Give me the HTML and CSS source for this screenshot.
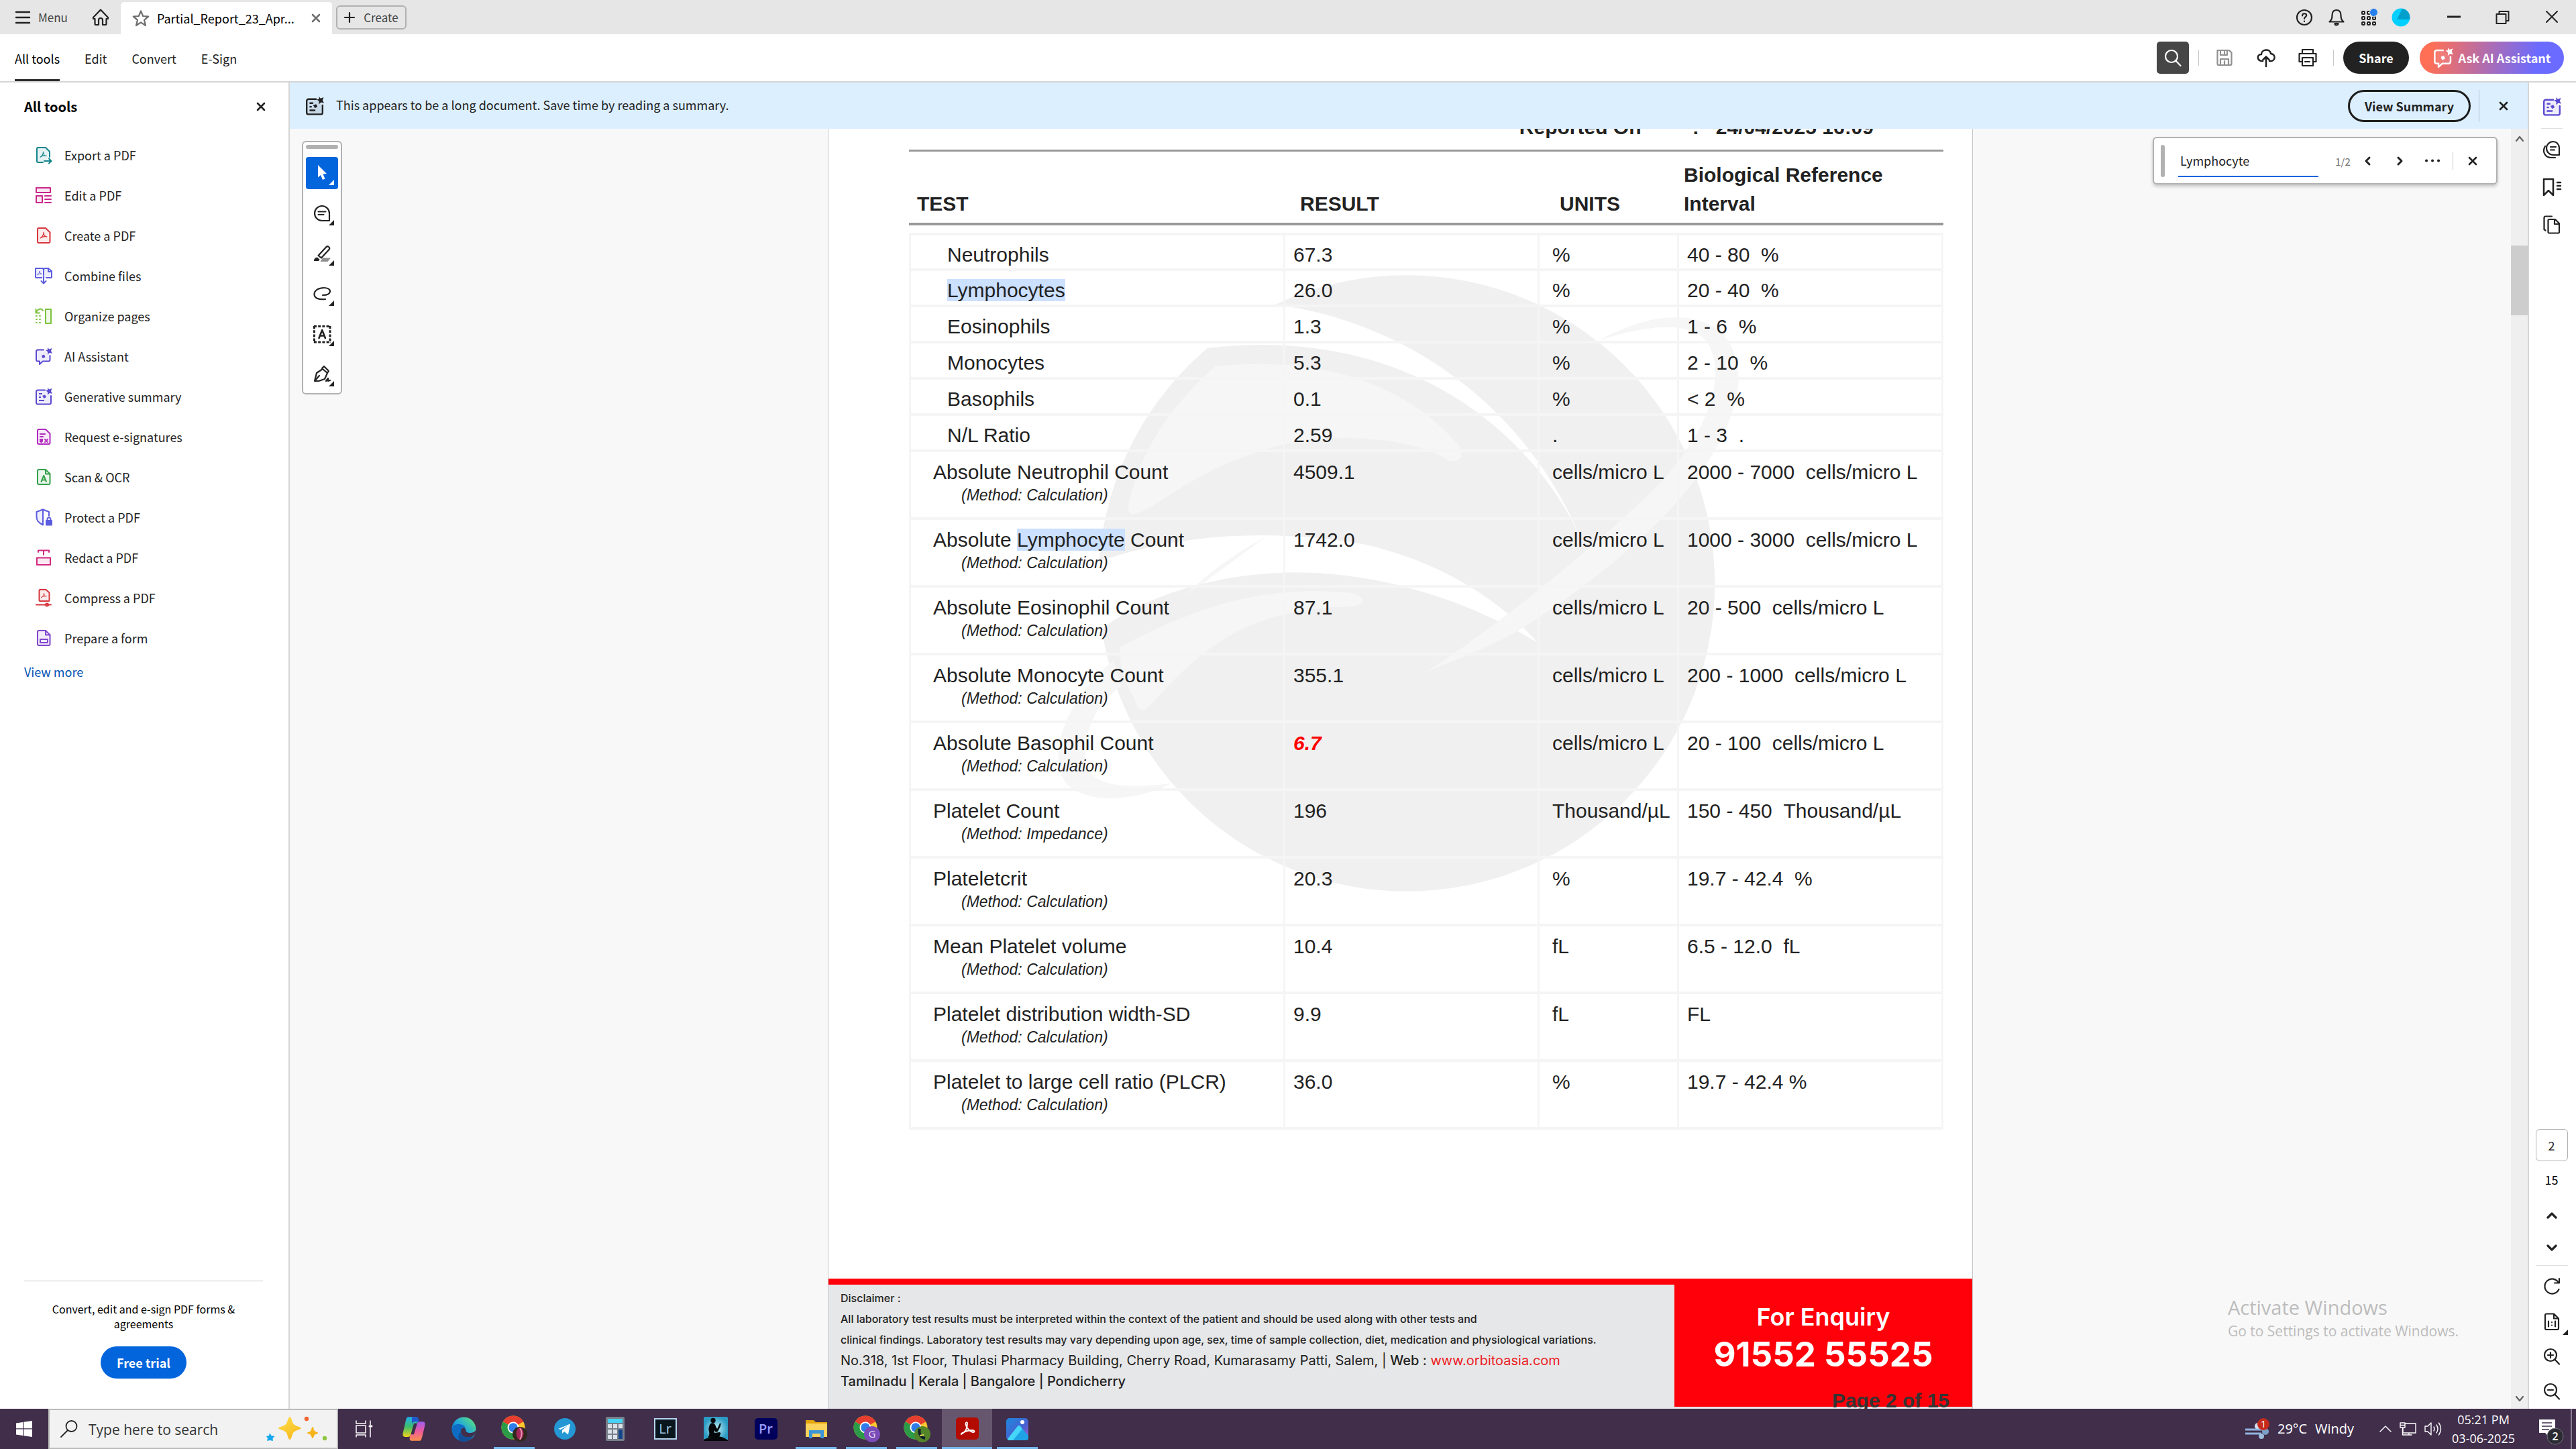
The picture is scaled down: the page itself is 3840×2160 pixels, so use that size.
FILE: index.html
```html
<!DOCTYPE html>
<html lang="en">
<head>
<meta charset="utf-8">
<title>Partial_Report_23_Apr...</title>
<link rel="stylesheet" href="styles.css">
</head>
<body>
<svg class="defs" aria-hidden="true">
  <defs>
    <linearGradient id="edge-a" x1="0" y1="1" x2="1" y2="0"><stop offset="0" stop-color="#0c59a4"/><stop offset=".5" stop-color="#1fa6dd"/><stop offset="1" stop-color="#66eb6e"/></linearGradient>
    <linearGradient id="cop-a" x1="0" y1="0" x2="0" y2="1"><stop offset="0" stop-color="#1fb0f0"/><stop offset=".5" stop-color="#3fbf6a"/><stop offset="1" stop-color="#f2d21c"/></linearGradient>
    <linearGradient id="cop-b" x1="0" y1="0" x2="0" y2="1"><stop offset="0" stop-color="#a05cf0"/><stop offset=".5" stop-color="#ee5a9c"/><stop offset="1" stop-color="#fb8f4c"/></linearGradient>
    <linearGradient id="photo" x1="0" y1="0" x2="1" y2="1"><stop offset="0" stop-color="#1b8ae0"/><stop offset=".6" stop-color="#4a5fd0"/><stop offset="1" stop-color="#b45ac8"/></linearGradient>
    <radialGradient id="kindle"><stop offset="0" stop-color="#c9f2f8"/><stop offset="1" stop-color="#2a9cc4"/></radialGradient>
    <linearGradient id="gold" x1="0" y1="0" x2="1" y2="1"><stop offset="0" stop-color="#ffe04a"/><stop offset="1" stop-color="#f2a90c"/></linearGradient>
  </defs>
  <symbol id="x" viewBox="0 0 26 26"><path d="M8 8l10 10M18 8L8 18" stroke-width="2.6"/></symbol>
  <symbol id="acro" viewBox="0 0 12 12"><path d="M1 10C4 8 6 5 6 1.500C6 5 8 8 11 8C8 7 4 8 1 10Z" stroke-width="1.300"/></symbol>
  <symbol id="sum" viewBox="0 0 26 26"><path class="t" d="M15 3.500H4.500A2.500 2.500 0 0 0 2 6v16a2.500 2.500 0 0 0 2.500 2.500h17A2.500 2.500 0 0 0 24 22V12"/><path d="M6 9h5M6 14h3M6 19h8" stroke-linecap="butt"/><path class="s" d="M19 0l2.300 2.500L25.500 1l-1.500 4 2 4-4-1-3 2.500V6.500L16 4l3-.5zM11 12l4-1.500 2 3.500-3.500 2z"/></symbol>
  <symbol id="ai" viewBox="0 0 26 26"><path class="t" d="M13 3.500H4.500A2.500 2.500 0 0 0 2 6v12a2.500 2.500 0 0 0 2.500 2.500H7V25l5-4.500h8a2.500 2.500 0 0 0 2.500-2.500v-6"/><path class="s" d="M19 0l2.300 2.500L25.500 1l-1.500 4 2 4-4-1-3 2.500V6.500L16 4l3-.5zM10 12l4-1.500 1.500 4-4 1.500z"/></symbol>
  <symbol id="file" viewBox="0 0 26 26"><path class="t" d="M6 2h10l6.500 6.500V22a2 2 0 0 1-2 2H6a2 2 0 0 1-2-2V4a2 2 0 0 1 2-2z"/></symbol>
  <symbol id="zoomin" viewBox="0 0 26 26"><circle cx="11" cy="11" r="9"/><path d="M17.500 17.500L24 24.500M11 7v8M7 11h8"/></symbol>
  <symbol id="zoomout" viewBox="0 0 26 26"><circle cx="11" cy="11" r="9"/><path d="M17.500 17.500L24 24.500M7 11h8"/></symbol>
  <symbol id="chrome" viewBox="0 0 38 38"><circle cx="19" cy="19" r="18.500" fill="#fcc72e"/><path d="M19 19L3 9.700A18.500 18.500 0 0 1 35 9.700z" fill="#e63e2f"/><path d="M3 9.700A18.500 18.500 0 0 0 19 37.500l8-14-8-4.500z" fill="#2b9b48"/><path d="M19 10h16.200l-4-5h-20z" fill="#e63e2f"/><circle cx="19" cy="19" r="9" fill="#fff"/><circle cx="19" cy="19" r="7" fill="#2f7de9"/></symbol>
</svg>

<header class="titlebar">
  <button class="menu"><svg class="i i22" viewBox="0 0 22 22"><path d="M1 3h20M1 11h20M1 19h20" stroke-width="2.400"/></svg>Menu</button>
  <button class="home" aria-label="Home"><svg class="i" viewBox="0 0 26 26"><path d="M2 13L13 1.500 24 13v2h-2.500v7.500a1.500 1.500 0 0 1-1.500 1.500h-4v-7a3 3 0 0 0-6 0v7H6a1.500 1.500 0 0 1-1.500-1.500V15H2z"/></svg></button>
  <div class="tab">
    <svg class="i gray" viewBox="0 0 26 26"><path d="M13 2.500l3.200 7.500 8 .6-6.200 5.200 2 8.200-7-4.600L6 24l2-8.200L1.800 10.600l8-.6z"/></svg>
    <span>Partial_Report_23_Apr...</span>
    <button aria-label="Close tab"><svg class="i gray"><use href="#x"/></svg></button>
  </div>
  <button class="create"><svg class="i i16" viewBox="0 0 16 16"><path d="M8 1v14M1 8h14"/></svg>Create</button>
  <div class="sys">
    <button aria-label="Help"><svg class="i" viewBox="0 0 26 26"><circle cx="13" cy="13" r="11"/><path d="M10 10.500c0-4.500 6.500-4 6.200-.5-.2 2.300-3.200 2-3.200 5M13 18.500v.6"/></svg></button>
    <button aria-label="Notifications"><svg class="i" viewBox="0 0 26 26"><path d="M13 2c5 0 6.500 3.500 6.500 8 0 5 1 6.500 4 9.500h-21c3-3 4-4.500 4-9.500 0-4.500 1.500-8 6.500-8z"/><path d="M10.500 22a2.500 2.500 0 0 0 5 0z"/></svg></button>
    <button aria-label="Apps"><svg class="i" viewBox="0 0 26 26"><g stroke-width="2"><rect x="3" y="4" width="4" height="4" rx="1"/><rect x="11" y="4" width="4" height="4" rx="1"/><rect x="3" y="12" width="4" height="4" rx="1"/><rect x="11" y="12" width="4" height="4" rx="1"/><rect x="19" y="12" width="4" height="4" rx="1"/><rect x="3" y="20" width="4" height="4" rx="1"/><rect x="11" y="20" width="4" height="4" rx="1"/><rect x="19" y="20" width="4" height="4" rx="1"/></g><circle cx="20.500" cy="5.500" r="6" fill="#2680eb" stroke="#e6e6e6" stroke-width="1"/></svg></button>
    <button aria-label="Account"><svg class="i i28" viewBox="0 0 28 28"><circle cx="14" cy="14" r="13.500" fill="#00d0ff" stroke="none"/><path d="M16 1a13 13 0 0 1 11 16H8z" fill="#009fcc" stroke="none"/></svg></button>
  </div>
  <div class="win">
    <button aria-label="Minimize"><svg class="i" viewBox="0 0 26 26"><path d="M3 12h20" stroke-width="3" stroke-linecap="butt"/></svg></button>
    <button aria-label="Restore"><svg class="i" viewBox="0 0 26 26"><path d="M3.500 8h14v14h-14zM7.500 8V4h14v14h-4" stroke-width="2"/></svg></button>
    <button aria-label="Close"><svg class="i" viewBox="0 0 26 26"><path d="M5 4l16 16M21 4L5 20" stroke-width="2"/></svg></button>
  </div>
</header>

<nav class="toolbar">
  <a href="#" class="on">All tools</a><a href="#">Edit</a><a href="#">Convert</a><a href="#">E-Sign</a>
  <div class="actions">
    <button class="find-on" aria-label="Find"><svg class="i" viewBox="0 0 26 26"><circle cx="11" cy="11" r="9"/><path d="M17 17l7.500 8"/></svg></button>
    <i class="vr"></i>
    <button aria-label="Save"><svg class="i light" viewBox="0 0 26 26"><path d="M3 2h17l3.500 3.500V22a2 2 0 0 1-2 2h-17a2 2 0 0 1-2-2V2zM7 2v7h10V2M13 4v3M7 24v-9h12v9M13 18v6"/></svg></button>
    <button aria-label="Upload"><svg class="i i28" viewBox="0 0 28 28"><path d="M9 19H7.500C0 18 0 9 7 9c0-8 13-9 14-1 8 1 7 11 0 11h-2M14 27V13M9.500 17l4.500-4.500 4.500 4.500" stroke-width="2.500"/></svg></button>
    <button aria-label="Print"><svg class="i i28" viewBox="0 0 28 28"><path d="M6 8V2h16v6M6 20H1.500V8h25v12H22M6 14h16v12H6zM10 20h7"/></svg></button>
    <i class="vr"></i>
    <button class="share">Share</button>
    <button class="ask"><svg class="i i30"><use href="#ai"/></svg>Ask AI Assistant</button>
  </div>
</nav>

<main>
  <aside class="tools">
    <div class="tools-head"><h2>All tools</h2><button aria-label="Close panel"><svg class="i"><use href="#x"/></svg></button></div>
    <ul>
      <li><a href="#"><svg class="i" style="color:#12858b" viewBox="0 0 26 26"><path class="t" d="M12 24H5a2 2 0 0 1-2-2V4a2 2 0 0 1 2-2h11l6 6v8"/><use href="#acro" x="7" y="7" width="11" height="11"/><path d="M14 22h10M21 18.500l3.500 3.500-3.500 3.500"/></svg>Export a PDF</a></li>
      <li><a href="#"><svg class="i" style="color:#c9268a" viewBox="0 0 26 26"><path class="t" d="M2 2h21v7H2zM2 14h9v10H2z"/><path d="M15 14h9M15 19h9M15 24h9"/></svg>Edit a PDF</a></li>
      <li><a href="#"><svg class="i" style="color:#d7373f" viewBox="0 0 26 26"><use href="#file"/><use href="#acro" x="7" y="7" width="12" height="12"/></svg>Create a PDF</a></li>
      <li><a href="#"><svg class="i" style="color:#5c5ce0" viewBox="0 0 26 26"><path class="t" d="M10 16H2a1 1 0 0 1-1-1V2h11l1 2 1-2h6l5 4v9a1 1 0 0 1-1 1h-7M13 3v9"/><path d="M20 2v5h5"/><use href="#acro" x="3" y="5" width="8" height="8"/><path d="M13 14v10M9.500 21l3.500 3.500 3.500-3.500"/></svg>Combine files</a></li>
      <li><a href="#"><svg class="i" style="color:#7cc33f" viewBox="0 0 26 26"><path class="t" d="M16 3h8v21h-8z"/><path d="M2 8c2-6 8-7 10-3M1.500 3v5.500H7"/><path d="M2 13h10M2 18h10M2 23h10" stroke-dasharray="1 4"/></svg>Organize pages</a></li>
      <li><a href="#"><svg class="i" style="color:#5a49d0"><use href="#ai"/></svg>AI Assistant</a></li>
      <li><a href="#"><svg class="i" style="color:#5a49d0"><use href="#sum"/></svg>Generative summary</a></li>
      <li><a href="#"><svg class="i" style="color:#b32abf" viewBox="0 0 26 26"><use href="#file"/><path d="M8 9h7M8 13h4M15 17l4 4M19 17l-4 4"/><path class="s" d="M7 16h5v4l-2.500 2.500L7 20z"/></svg>Request e-signatures</a></li>
      <li><a href="#"><svg class="i" style="color:#35a14b" viewBox="0 0 26 26"><use href="#file"/><path d="M16 2v6.500h6.500M9.500 20l3.700-9 3.800 9M10.700 17.500h5"/></svg>Scan &amp; OCR</a></li>
      <li><a href="#"><svg class="i" style="color:#5c5ce0" viewBox="0 0 26 26"><path class="t" d="M12 24.500C5 21 2.500 18 2.500 12V5L12 1.500z"/><path d="M12 1.500L21 5v6"/><rect class="s" x="16" y="17" width="10" height="8.500" rx="1"/><path d="M18.500 17v-1a2.500 2.500 0 0 1 5 0v1"/></svg>Protect a PDF</a></li>
      <li><a href="#"><svg class="i" style="color:#d12a80" viewBox="0 0 26 26"><path class="t" d="M3 13.500h20V24H3z"/><path d="M5 5V2.500h16V5M13 2.500V9"/></svg>Redact a PDF</a></li>
      <li><a href="#"><svg class="i" style="color:#d7373f" viewBox="0 0 26 26"><path class="t" d="M7.500 1h9l5 4.500V17a1 1 0 0 1-1 1h-13a1 1 0 0 1-1-1V2a1 1 0 0 1 1-1z"/><use href="#acro" x="9" y="5" width="9" height="9"/><path d="M2 23.500h22"/><circle class="t" cx="18" cy="23.500" r="2"/></svg>Compress a PDF</a></li>
      <li><a href="#"><svg class="i" style="color:#8148cf" viewBox="0 0 26 26"><use href="#file"/><path d="M16 2v6.500h6.500M8 15h11v5H8z"/></svg>Prepare a form</a></li>
    </ul>
    <a href="#" class="more">View more</a>
    <div class="promo"><p>Convert, edit and e-sign PDF forms &amp; agreements</p><button>Free trial</button></div>
  </aside>

  <section class="center">
    <div class="banner">
      <svg class="i i28"><use href="#sum"/></svg>
      <p>This appears to be a long document. Save time by reading a summary.</p>
      <button class="view">View Summary</button><i></i>
      <button aria-label="Dismiss"><svg class="i"><use href="#x"/></svg></button>
    </div>
    <div class="viewer">
      <div class="scroller">
        <article class="page">
          <div class="sheet">
            <svg class="mark-bg" viewBox="0 0 1568 1568" preserveAspectRatio="none" aria-hidden="true">
              <ellipse cx="752" cy="814" rx="456" ry="706" fill="#f0f0f0"/>
              <path fill="#fff" d="M457 275L380 200 555 175C760 215 930 420 1008 705 940 480 760 220 457 275z"/>
              <path fill="#fff" d="M285 770C420 695 560 690 690 725 800 765 885 845 946 950 840 850 700 780 560 790 440 800 350 860 300 920z"/>
              <g fill="#f6f6f6">
                <path d="M470 316C640 290 760 370 830 500Q842 535 815 534C770 480 640 465 560 500 450 545 400 620 360 650Q340 665 340 640C355 520 400 410 470 316z"/>
                <path d="M328 960C460 850 560 820 670 836 700 850 690 870 650 868 500 880 440 980 370 1098Q355 1115 350 1080 325 1020 328 960z"/>
                <path d="M1036 258C1150 160 1245 200 1243 350 1235 520 1120 720 930 910 880 960 820 990 780 1018 900 900 1060 690 1130 580 1210 440 1220 330 1200 270 1180 210 1110 220 1036 258z"/>
                <path d="M545 706L450 815 425 840Q480 760 545 706z"/>
                <path d="M318 990C230 1110 225 1230 250 1275 280 1320 350 1315 405 1272 320 1290 275 1270 276 1210 278 1130 300 1080 330 1050z"/>
              </g>
            </svg>
            <dl class="meta"><dt>Reported On</dt><dd>:</dd><dd>24/04/2025 16:09</dd></dl>
            <table>
              <colgroup><col class="c1"><col class="c2"><col class="c3"><col></colgroup>
              <thead><tr><th>TEST</th><th>RESULT</th><th>UNITS</th><th>Biological Reference<br>Interval</th></tr></thead>
              <tbody>
                <tr class="sub"><td>Neutrophils</td><td>67.3</td><td>%</td><td>40 - 80 &nbsp;%</td></tr>
                <tr class="sub"><td><mark>Lymphocytes</mark></td><td>26.0</td><td>%</td><td>20 - 40 &nbsp;%</td></tr>
                <tr class="sub"><td>Eosinophils</td><td>1.3</td><td>%</td><td>1 - 6 &nbsp;%</td></tr>
                <tr class="sub"><td>Monocytes</td><td>5.3</td><td>%</td><td>2 - 10 &nbsp;%</td></tr>
                <tr class="sub"><td>Basophils</td><td>0.1</td><td>%</td><td>&lt; 2 &nbsp;%</td></tr>
                <tr class="sub"><td>N/L Ratio</td><td>2.59</td><td>.</td><td>1 - 3 &nbsp;.</td></tr>
                <tr><td>Absolute Neutrophil Count<em>(Method: Calculation)</em></td><td>4509.1</td><td>cells/micro L</td><td>2000 - 7000 &nbsp;cells/micro L</td></tr>
                <tr><td>Absolute <mark>Lymphocyte</mark> Count<em>(Method: Calculation)</em></td><td>1742.0</td><td>cells/micro L</td><td>1000 - 3000 &nbsp;cells/micro L</td></tr>
                <tr><td>Absolute Eosinophil Count<em>(Method: Calculation)</em></td><td>87.1</td><td>cells/micro L</td><td>20 - 500 &nbsp;cells/micro L</td></tr>
                <tr><td>Absolute Monocyte Count<em>(Method: Calculation)</em></td><td>355.1</td><td>cells/micro L</td><td>200 - 1000 &nbsp;cells/micro L</td></tr>
                <tr><td>Absolute Basophil Count<em>(Method: Calculation)</em></td><td class="flag">6.7</td><td>cells/micro L</td><td>20 - 100 &nbsp;cells/micro L</td></tr>
                <tr><td>Platelet Count<em>(Method: Impedance)</em></td><td>196</td><td>Thousand/µL</td><td>150 - 450 &nbsp;Thousand/µL</td></tr>
                <tr><td>Plateletcrit<em>(Method: Calculation)</em></td><td>20.3</td><td>%</td><td>19.7 - 42.4 &nbsp;%</td></tr>
                <tr><td>Mean Platelet volume<em>(Method: Calculation)</em></td><td>10.4</td><td>fL</td><td>6.5 - 12.0 &nbsp;fL</td></tr>
                <tr><td>Platelet distribution width-SD<em>(Method: Calculation)</em></td><td>9.9</td><td>fL</td><td>FL</td></tr>
                <tr><td>Platelet to large cell ratio (PLCR)<em>(Method: Calculation)</em></td><td>36.0</td><td>%</td><td>19.7 - 42.4 %</td></tr>
              </tbody>
            </table>
          </div>
          <footer class="lab">
            <div class="disc">
              <p>Disclaimer :</p>
              <p>All laboratory test results must be interpreted within the context of the patient and should be used along with other tests and</p>
              <p>clinical findings. Laboratory test results may vary depending upon age, sex, time of sample collection, diet, medication and physiological variations.</p>
              <p class="addr">No.318, 1st Floor, Thulasi Pharmacy Building, Cherry Road, Kumarasamy Patti, Salem, | <b>Web :</b> <a href="#">www.orbitoasia.com</a></p>
              <p class="addr"><b>Tamilnadu | Kerala | Bangalore | Pondicherry</b></p>
            </div>
            <div class="call"><p>For Enquiry</p><strong>91552 55525</strong></div>
            <span class="pageno">Page 2 of 15</span>
          </footer>
        </article>

        <div class="float">
          <i class="grip"></i>
          <button class="sel" aria-label="Select"><svg class="i" viewBox="0 0 26 26"><path d="M7 1l13 13-5.500.5 3 7-3.500 1.500-3-7L7 19.500z" fill="#fff" stroke="none"/></svg></button>
          <button aria-label="Comment"><svg class="i" viewBox="0 0 26 26"><path d="M13 2a11 11 0 0 0 0 22h11V13A11 11 0 0 0 13 2z"/><path d="M7.500 10.500h11M7.500 15h8"/></svg></button>
          <button aria-label="Highlight"><svg class="i" viewBox="0 0 26 26"><path d="M7.500 16L19 3.500a2.500 2.500 0 0 1 4.500 3.500L12 19.500z"/><path d="M1 24c0-4 3-6 5.500-5l3 3-1.500 2z" class="s"/><path d="M14 19.500h12L21.500 25h-11z" fill="#909090" stroke="none"/></svg></button>
          <button aria-label="Draw"><svg class="i" viewBox="0 0 26 26"><path d="M14 15c5 0 11-1 11-6 0-3-4-5-9-5C8 4 1.500 8 1.500 13.500S7 22 18 21"/></svg></button>
          <button aria-label="Add text"><svg class="i" viewBox="0 0 26 26"><path d="M1 1.500h25M1 25h25M1.500 1v25M25 1v25" stroke-width="3" stroke-dasharray="4 2.200" stroke-linecap="butt"/><path d="M8.500 19l4.700-12 4.700 12M10 15.500h6.500" stroke-width="2.600"/></svg></button>
          <button aria-label="Sign"><svg class="i" viewBox="0 0 26 26"><path d="M2 23L5 11l9-6 7 6-4 9-9 3zM2 23l7-8M13 4l3-3 7 7-2 3M19 23l3-4v4l3-1"/></svg></button>
        </div>

        <form class="find">
          <i class="grip"></i>
          <input type="text" value="Lymphocyte" aria-label="Find text">
          <span>1/2</span>
          <button type="button" aria-label="Previous"><svg class="i" viewBox="0 0 26 26"><path d="M16 8l-5 5 5 5" stroke-width="3"/></svg></button>
          <button type="button" aria-label="Next"><svg class="i" viewBox="0 0 26 26"><path d="M10 8l5 5-5 5" stroke-width="3"/></svg></button>
          <button type="button" aria-label="More"><svg class="i" viewBox="0 0 26 26"><path d="M4 12.500h.1M13 12.500h.1M22 12.500h.1" stroke-width="4"/></svg></button>
          <b></b>
          <button type="button" aria-label="Close find"><svg class="i"><use href="#x"/></svg></button>
        </form>

        <div class="activate"><p>Activate Windows</p><p>Go to Settings to activate Windows.</p></div>
      </div>
      <div class="scrollbar">
        <svg class="i i16" viewBox="0 0 16 16"><path d="M3 11l5-6 5 6"/></svg>
        <i></i>
        <svg class="i i16 end" viewBox="0 0 16 16"><path d="M3 5l5 6 5-6"/></svg>
      </div>
    </div>
  </section>

  <aside class="rail">
    <button aria-label="Summary"><svg class="i i28 violet"><use href="#sum"/></svg></button>
    <hr>
    <button aria-label="Comments"><svg class="i i28" viewBox="0 0 28 28"><path d="M16 2a10 10 0 0 0 0 20h9V12a9.500 9.500 0 0 0-9-10zM12 10h8M12 14.500h6M4 9c-5 8 0 17 9 17h6"/></svg></button>
    <button aria-label="Bookmarks"><svg class="i i28" viewBox="0 0 28 28"><path d="M2 2h14v24l-7-7-7 7zM22 7h5M22 12h5M22 17h5" stroke-width="2.500"/></svg></button>
    <button aria-label="Pages"><svg class="i i28" viewBox="0 0 28 28"><path d="M10 6h9l6 6v13a1.500 1.500 0 0 1-1.500 1.500H10A1.500 1.500 0 0 1 8.500 25V7.500A1.500 1.500 0 0 1 10 6zM18 6v7h7M14 1.500H4.500A2 2 0 0 0 2.500 3.500V21l2 1.500"/></svg></button>
    <div class="rail-end">
      <input type="text" value="2" aria-label="Page number">
      <span>15</span>
      <button aria-label="Page up"><svg class="i" viewBox="0 0 26 26"><path d="M7 16l6-6 6 6" stroke-width="3.200"/></svg></button>
      <button aria-label="Page down"><svg class="i" viewBox="0 0 26 26"><path d="M7 10l6 6 6-6" stroke-width="3.200"/></svg></button>
      <hr>
      <button class="tall" aria-label="Rotate"><svg class="i" viewBox="0 0 26 26"><path d="M23 8A11 11 0 1 0 23.500 18M24 2v6.500h-7" /></svg></button>
      <button class="tall corner" aria-label="Page size"><svg class="i" viewBox="0 0 26 26"><path d="M5 1.500h11l7 7V23a2 2 0 0 1-2 2H5a2 2 0 0 1-2-2V3.500a2 2 0 0 1 2-2zM16 1.500v7h7M8 12.500v8M18 12.500v8M13 14v.1M13 18.500v.1"/></svg></button>
      <button class="tall" aria-label="Zoom in"><svg class="i"><use href="#zoomin"/></svg></button>
      <button class="tall" aria-label="Zoom out"><svg class="i"><use href="#zoomout"/></svg></button>
    </div>
  </aside>
</main>

<footer class="taskbar">
  <button class="start" aria-label="Start"><svg width="24" height="24" viewBox="0 0 24 24" fill="#fff"><path d="M0 3.400L10 2v9.300H0zM11.200 1.800L24 0v11.300H11.200zM0 12.500h10V22L0 20.500zM11.200 12.500H24V24l-12.800-1.800z"/></svg></button>
  <label class="search">
    <svg class="i" viewBox="0 0 26 26"><circle cx="16.500" cy="9" r="8"/><path d="M11 15L1 25"/></svg>
    <input type="text" placeholder="Type here to search">
    <svg width="94" height="38" viewBox="0 0 94 38"><path d="M37 1c2 0 3 6 5 10s12 5 12 7-10 3-12 7-3 10-5 10-3-6-5-10-12-5-12-7 10-3 12-7 3-10 5-10zM71 16c1.500 0 1.500 4 3 6s5 1.500 5 3-3.500 1.500-5 3-1.500 5-3 5-1.500-3.500-3-5-5-1.500-5-3 3.500-1 5-3 1.500-6 3-6z" fill="url(#gold)"/><path d="M7 25l2.500 4 5 1-3 3 .5 4-5-1-4 1 1-4-2-3 4-1z" fill="#17a8ee"/><circle cx="62" cy="4" r="3.200" fill="#f26430"/><circle cx="89" cy="33" r="3.200" fill="#8fc640"/></svg>
  </label>
  <div class="apps">
    <button aria-label="Task view"><svg class="i" viewBox="0 0 26 26" stroke="#fff"><path d="M2 1v4h14V1M2 8h14v11H2zM2 25v-3h14v3M23 1v6M23 11v14" stroke-width="1.500"/><path d="M22 9h3" stroke-width="3"/></svg></button>
    <button aria-label="Copilot"><svg width="36" height="38" viewBox="0 0 36 32" preserveAspectRatio="none"><path d="M9 1h12c3 0 4 2 3 5l-1 3h-5l-5 15c-1 2-2 2-4 2H5c-4 0-4-3-3-6L6 5c1-3 2-4 3-4z" fill="url(#cop-a)"/><path d="M15 1h6c3 0 4 2 5 6h-7c-2 0-3 1-4 3z" fill="#1f57d0"/><path d="M27 31H15c-3 0-4-2-3-5l1-3h5l5-14c1-2 2-2 4-2h4c4 0 4 3 3 6l-4 14c-1 3-2 4-3 4z" fill="url(#cop-b)"/></svg></button>
    <button aria-label="Edge"><svg width="37" height="37" viewBox="0 0 37 37"><circle cx="18.500" cy="18.500" r="18" fill="url(#edge-a)"/><path d="M1 17C3 9 20 9 21 18c-4-3-8 0-7 5 1 6 8 10 18 6-8 11-31 11-31-12z" fill="#0f6cc4"/><path d="M21 18c0 4 2 6 7 6 4 0 7-2 8.500-4 0 4-2 7-4.500 9-10 4-17 0-18-6-1-5 3-8 7-5z" fill="#402e4b"/><path d="M14 23c1 6 8 10 18 6-5 8-14 9-19 7-4-4-3-10 1-13z" fill="#124f96"/></svg></button>
    <button class="run" aria-label="Chrome"><svg width="40" height="40" viewBox="0 0 40 40"><use href="#chrome" width="36" height="36"/><circle cx="28" cy="28" r="11" fill="#31281d"/><ellipse cx="28" cy="27" rx="5.500" ry="9" fill="#a32458"/><path d="M28 19c4 5 3 12 0 17" stroke="#e898b0" stroke-width="2" fill="none"/></svg></button>
    <button aria-label="Telegram"><svg width="32" height="32" viewBox="0 0 32 32"><circle cx="16" cy="16" r="16" fill="#2497d4"/><path d="M6 16l18-7.500-3 16-6-4.500-3 3v-5l8-7-10 6z" fill="#fff"/></svg></button>
    <button aria-label="Calculator"><svg width="28" height="36" viewBox="0 0 28 36"><rect width="28" height="36" rx="2" fill="#77808a"/><rect x="3" y="3" width="22" height="6" fill="#45d3f5"/><path d="M3 11h6v6H3zM11 11h6v6h-6zM19 11h6v6h-6zM3 19h6v6H3zM11 19h6v6h-6zM3 27h6v6H3zM11 27h6v6h-6z" fill="#dbe1e8"/><path d="M19 19h6v14h-6z" fill="#15468c"/></svg></button>
    <button aria-label="Lightroom"><span class="lr">Lr</span></button>
    <button aria-label="Kindle"><svg width="36" height="36" viewBox="0 0 36 36"><rect width="36" height="36" rx="2" fill="url(#kindle)"/><path d="M0 36v-2c6-3 10-3 14-3 8-3 16-1 22 4v1z" fill="#05070a"/><circle cx="14" cy="5.500" r="3.700" fill="#05070a"/><path d="M9 12c2-4 7-3 8 0l3 6 3-5 2 1-4 8-3 1-2-3v4l8-1c2 1 1 3 0 5l-1 3H6c2-3 3-5 2-9-1-3-1-6 1-10z" fill="#05070a"/><path d="M22 17l3-7" stroke="#05070a" stroke-width="2"/></svg></button>
    <button aria-label="Premiere Pro"><span class="pr">Pr</span></button>
    <button class="run" aria-label="File Explorer"><svg width="34" height="28" viewBox="0 0 34 28"><path d="M1 1h12l3 3h17v22H1z" fill="#e5a50f"/><path d="M1 6h32v20H1z" fill="#fcd35c"/><path d="M6 28V16h22v12h-5v-7H11v7z" fill="#3b95d8"/></svg></button>
    <button class="run" aria-label="Chrome profile G"><svg width="40" height="40" viewBox="0 0 40 40"><use href="#chrome" width="36" height="36"/><circle cx="28" cy="28" r="12" fill="#7a4cb8"/><text x="28" y="33" text-anchor="middle" font-size="15" fill="#e6dcf5">G</text></svg></button>
    <button class="run" aria-label="Chrome profile"><svg width="40" height="40" viewBox="0 0 40 40"><use href="#chrome" width="36" height="36"/><circle cx="28" cy="28" r="12" fill="#55852a"/><path d="M24 20c-2 8 2 13 8 14" stroke="#10202a" stroke-width="4" fill="none"/><path d="M24 30l6-1" stroke="#e4dc56" stroke-width="2"/></svg></button>
    <button class="run now" aria-label="Acrobat"><svg width="34" height="34" viewBox="0 0 34 34"><rect width="34" height="33" rx="5" fill="#b30b00"/><path d="M8 25c6-3 9-9 9-16 0-3-3-2-2.500 1 1 6 7 12 12 12 2-1 1-3-2-3-6 0-11 2-15 4-2 1-2 2-1.500 2z" fill="none" stroke="#fff" stroke-width="1.800"/></svg></button>
    <button class="run" aria-label="Photos"><svg width="33" height="33" viewBox="0 0 33 33"><rect width="33" height="33" rx="5" fill="url(#photo)"/><path d="M2 31L17 12q2-2 4 0l12 14v4q0 3-4 3H5q-3 0-3-2z" fill="#1fa3e6"/><path d="M2 31L17 12q2-2 4 0l3 4L10 33H5q-3 0-3-2z" fill="#45d6f7"/><circle cx="24" cy="6" r="3" fill="#fff"/></svg></button>
  </div>
  <div class="tray">
    <div class="weather"><svg width="36" height="32" viewBox="0 0 36 32"><circle cx="19" cy="12" r="5" fill="#d5e2f0"/><path d="M0 17h30M0 23h24" stroke="#8fb4dc" stroke-width="3"/><circle cx="30" cy="20" r="5" fill="#7c9fc8"/><circle cx="24" cy="27" r="4" fill="#9dbbdc"/><circle cx="27" cy="9" r="9" fill="#c42b1c"/><text x="27" y="14" text-anchor="middle" font-size="14" fill="#fff">1</text></svg><span>29°C</span><span>Windy</span></div>
    <svg class="i i20" viewBox="0 0 20 20"><path d="M2 14l8-8 8 8" stroke-width="1.500"/></svg>
    <svg class="i" viewBox="0 0 26 26"><path d="M8 5h16v14H5v-8M1 4h7v7H1zM4.500 11v11H18M14 19v3M1 7.500h7" stroke-width="1.400"/></svg>
    <svg class="i" viewBox="0 0 26 26"><path d="M1 9h4l5-5v18l-5-5H1zM14 10q2 3 0 6M18 7q4 6 0 12M21.500 4q6 9 0 18" stroke-width="1.400"/></svg>
    <div class="clock"><span>05:21 PM</span><span>03-06-2025</span></div>
    <button class="note" aria-label="Notifications"><svg width="38" height="40" viewBox="0 0 38 40"><path d="M1 1h24v20H15v5l-5-5H1z" fill="#fff"/><path d="M5 6h15M5 11h15M5 16h11" stroke="#402e4b" stroke-width="1.500"/><circle cx="25" cy="26" r="12" fill="#2b2b33" stroke="#77737d"/><text x="25" y="32" text-anchor="middle" font-size="16" font-weight="600" fill="#fff">2</text></svg></button>
  </div>
</footer>
</body>
</html>
```
FILE: styles.css
```css
* { box-sizing: border-box; }
body {
  margin: 0; height: 100vh; display: flex; flex-direction: column; overflow: hidden;
  font: 18px/24px "Noto Sans CJK JP", "Noto Sans", sans-serif; color: #222; background: #f8f8f8;
}
button { font: inherit; color: inherit; background: none; border: 0; padding: 0; display: flex; align-items: center; justify-content: center; }
a { color: inherit; text-decoration: none; }
p, h2, ul, dl, dd { margin: 0; padding: 0; list-style: none; }
input { font: inherit; color: inherit; outline: 0; min-width: 0; }
.defs { position: absolute; width: 0; height: 0; }
.i { width: 26px; height: 26px; flex: none; display: block; fill: none; stroke: currentColor; stroke-width: 2.200; stroke-linecap: round; stroke-linejoin: round; overflow: visible; }
.i16 { width: 16px; height: 16px; }
.i20 { width: 20px; height: 20px; }
.i22 { width: 22px; height: 22px; }
.i28 { width: 28px; height: 28px; }
.i30 { width: 30px; height: 30px; }
.t { fill: currentColor; fill-opacity: .1; }
.s { fill: currentColor; stroke: none; }
.gray { color: #6e6e6e; }
.light { color: #909090; }
.violet { color: #5a49d0; }

.titlebar { height: 51px; flex: none; display: flex; align-items: center; background: #e6e6e6; color: #222; }
.menu { gap: 12px; padding-left: 23px; color: #444; font-size: 17px; }
.menu svg { color: #222; }
.home { margin: 0 17px 0 36px; }
.tab { align-self: flex-end; width: 315px; height: 48px; padding: 0 11px 0 17px; display: flex; align-items: center; gap: 11px; background: #fff; border-radius: 5px 5px 0 0; color: #000; }
.tab button { margin-left: auto; }
.create { width: 105px; height: 36px; margin-left: 6px; gap: 13px; border: 2px solid #b1b1b1; border-radius: 6px; color: #444; font-size: 17px; }
.create svg { color: #222; }
.sys { margin-left: auto; display: flex; }
.sys button { width: 48px; }
.win { display: flex; margin-left: 18px; }
.win button { width: 73px; }

.toolbar { height: 72px; flex: none; display: flex; align-items: stretch; gap: 37px; padding: 0 18px 0 22px; background: #fff; border-bottom: 2px solid #d5d5d5; }
.toolbar > a { display: flex; align-items: center; padding-top: 5px; border-bottom: 3px solid transparent; }
.toolbar > a.on { border-color: #2c2c2c; color: #000; }
.actions { margin-left: auto; display: flex; align-items: center; gap: 14px; }
.actions button { width: 48px; height: 48px; }
.actions .find-on { background: #464646; color: #fff; border-radius: 5px; }
.vr { width: 1px; height: 24px; background: #c8c8c8; }
.actions .share { width: 98px; margin-right: 2px; border-radius: 24px; background: #222; color: #fff; font-weight: 700; }
.actions .ask { width: 215px; border-radius: 24px; gap: 8px; color: #fff; font-weight: 700; background: linear-gradient(100deg, #ff6f55 8%, #6b6bff 80%); }

main { flex: 1; min-height: 0; display: flex; }
.tools { width: 432px; flex: none; display: flex; flex-direction: column; background: #fff; border-right: 2px solid #d5d5d5; padding: 23px 0 45px; }
.tools-head { display: flex; justify-content: space-between; align-items: center; padding: 0 28px 0 36px; }
.tools-head h2 { font-size: 20px; line-height: 24px; color: #000; }
.tools ul { margin-top: 29px; }
.tools li a { display: flex; align-items: center; gap: 18px; height: 60px; padding-left: 52px; }
.tools li a svg { stroke-width: 2; }
.more { margin: 8px 0 0 36px; color: #0054b6; }
.promo { margin: auto 38px 0 36px; border-top: 1px solid #c8c8c8; padding-top: 30px; text-align: center; font-size: 16px; line-height: 22px; color: #000; }
.promo p { padding: 0 30px; }
.promo button { width: 128px; height: 48px; margin: 23px auto 0; border-radius: 24px; background: #0265dc; color: #fff; font-size: 18px; font-weight: 700; }

.center { flex: 1; min-width: 0; display: flex; flex-direction: column; }
.banner { height: 69px; flex: none; display: flex; align-items: center; background: #dcefff; padding: 0 23px; }
.banner p { margin: 0 auto 0 18px; padding-bottom: 3px; }
.banner .view { width: 183px; height: 48px; border: 3px solid #1d1d1d; border-radius: 24px; font-weight: 700; }
.banner i { width: 1px; height: 48px; margin: 0 23px 0 12px; background: #b6c2cc; }
.viewer { flex: 1; min-height: 0; display: flex; }
.scroller { flex: 1; position: relative; overflow: hidden; }
.scrollbar { width: 25px; background: #efefef; color: #606060; display: flex; flex-direction: column; align-items: center; padding: 7px 0; }
.scrollbar i { width: 100%; height: 104px; margin-top: 151px; background: #cdcdcd; }
.scrollbar .end { margin-top: auto; }

.page { width: 1707px; height: 100%; margin: 0 auto; display: flex; flex-direction: column; background: #fff; border: solid #c8c8c8; border-width: 0 1px; font-family: "Liberation Sans", Arial, sans-serif; color: #222; }
.sheet { position: relative; padding: 0 43px 0 120px; font-size: 30px; line-height: 34px; }
.mark-bg { position: absolute; left: 104px; top: 148px; width: 1580px; height: 1020px; }
.meta { position: relative; display: grid; grid-template-columns: 258px 35px auto; justify-content: end; margin: -19px 104px 16px 0; font-weight: 700; }
table { position: relative; width: 100%; table-layout: fixed; border-collapse: separate; border-spacing: 0; }
.c1 { width: 558px; } .c2 { width: 379px; } .c3 { width: 208px; }
th { height: 113px; padding: 13px 0 7px 10px; border: solid #999; border-width: 3px 0 4px; text-align: left; vertical-align: bottom; line-height: 43px; }
th:nth-child(1) { padding-left: 12px; }
th:nth-child(2) { padding-left: 25px; }
th:nth-child(3) { padding-left: 33px; }
tbody::before { content: ""; display: block; height: 11px; }
td { height: 101px; padding: 13px 0 0 36px; border: solid #f5f5f5; border-width: 0 0 4px 3px; vertical-align: top; white-space: nowrap; }
td:nth-child(1) { padding-left: 33px; }
td:nth-child(2) { padding-left: 12px; }
td:nth-child(3) { padding-left: 19px; }
td:nth-child(4) { padding-left: 12px; border-right-width: 3px; }
.sub td { height: 54px; padding-top: 12px; }
.sub td:first-child { padding-left: 54px; }
tbody tr:first-child td { border-top-width: 4px; height: 57px; }
td em { display: block; padding-left: 42px; font-size: 23px; }
mark { background: #cce0ff; color: inherit; }
.flag { color: #f00; font-weight: 700; font-style: italic; }

.lab { position: relative; height: 194px; margin-top: auto; border-top: 9px solid #ff000a; display: flex; overflow: hidden; background: #e6e7e8; color: #222; font-family: Inter, sans-serif; font-size: 16px; line-height: 31px; font-weight: 500; }
.disc { flex: 1; padding: 5px 0 0 18px; white-space: nowrap; }
.addr { font-size: 20px; font-weight: 400; }
.addr b { font-weight: 500; }
.addr a { color: #ec1c24; }
.call { width: 444px; height: 182px; padding-top: 23px; background: #ff000a; color: #fff; text-align: center; font-size: 36px; line-height: 50px; font-weight: 600; }
.call strong { display: block; font-size: 51px; line-height: 62px; font-weight: 700; }
.pageno { position: absolute; right: 34px; bottom: -5px; font: 700 30px/34px "Liberation Sans", Arial, sans-serif; color: #333; }

.float { position: absolute; left: 18px; top: 18px; width: 60px; height: 378px; padding: 4px; display: flex; flex-direction: column; gap: 12px; background: #fff; border: 2px solid #b1b1b1; border-radius: 6px; }
.grip { height: 6px; border-radius: 3px; background: #b1b1b1; }
.float button { position: relative; height: 48px; flex: none; border-radius: 4px; }
.float button::after, .corner::after { content: ""; position: absolute; right: 6px; bottom: 6px; border: 4px solid #222; border-top-color: transparent; border-left-color: transparent; }
.float .sel { background: #0265dc; }
.float .sel::after { border-right-color: #fff; border-bottom-color: #fff; }

.find { position: absolute; right: 20px; top: 12px; width: 514px; height: 71px; padding: 0 11px 0 10px; display: flex; align-items: center; background: #fff; border: 2px solid #b1b1b1; border-radius: 6px; box-shadow: 0 3px 5px rgba(0, 0, 0, .2); }
.find .grip { width: 6px; height: 48px; margin-right: 20px; }
.find input { width: 211px; height: 48px; padding: 0 3px; border: 0; border-bottom: 2px solid #0265dc; }
.find span { margin: 2px 1px 0 25px; font-size: 15px; color: #6e6e6e; }
.find button { width: 49px; }
.find b { width: 1px; height: 27px; margin: 0 4px 0 6px; background: #c8c8c8; }
.activate { position: absolute; right: 78px; bottom: 101px; color: #bcbcbc; font: 21px/30px "Open Sans", sans-serif; }
.activate p:first-child { font-size: 29px; line-height: 40px; }

.rail { width: 72px; flex: none; display: flex; flex-direction: column; align-items: center; background: #fff; border-left: 2px solid #d5d5d5; padding: 8px 3px 0 0; }
.rail button { width: 60px; height: 56px; flex: none; }
.rail hr { width: 32px; height: 1px; margin: 4px 0 3px; border: 0; background: #e0e0e0; flex: none; }
.rail-end { margin-top: auto; display: flex; flex-direction: column; align-items: center; }
.rail-end input { width: 48px; height: 48px; border: 1px solid #b1b1b1; border-radius: 6px; text-align: center; padding: 0; }
.rail-end span { margin: 15px 0 18px; color: #000; }
.rail-end button { height: 48px; position: relative; }
.rail-end .tall { height: 52px; }
.rail-end .corner { height: 53px; }
.rail-end hr { width: 48px; margin: 2px 0 4px; }

.taskbar { height: 60px; flex: none; display: flex; align-items: stretch; background: #402e4b; color: #fff; font-family: "Open Sans", sans-serif; }
.start { width: 72px; }
.search { width: 432px; display: flex; align-items: center; padding: 0 13px 0 16px; background: #f2f2f2; border: 2px solid #bbb; color: #222; font-size: 21px; }
.search input { flex: 1; margin-left: 16px; border: 0; padding: 2px 0 0; background: none; }
.search input::placeholder { color: #333; opacity: 1; }
.search .i { stroke-width: 1.800; }
.apps { display: flex; }
.apps button { width: 75px; position: relative; }
.apps .run::after { content: ""; position: absolute; left: 7px; right: 7px; bottom: 0; height: 3px; background: #76b9ed; }
.apps .now { background: #66576f; }
.apps .now::after { left: 0; right: 0; }
.lr { width: 34px; height: 32px; border: 2px solid #b4d5ee; background: #0a161e; color: #a8cbe6; font: 20px/28px "Open Sans", sans-serif; }
.pr { width: 34px; height: 32px; border-radius: 5px; background: #00005b; color: #9999ff; font: 600 20px/31px "Open Sans", sans-serif; }
.tray { margin-left: auto; display: flex; align-items: center; gap: 11px; padding-right: 6px; }
.weather { display: flex; align-items: center; gap: 12px; font-size: 20px; margin-right: 26px; }
.clock { display: flex; flex-direction: column; align-items: center; line-height: 28px; margin: 0 14px 0 4px; }
.note { width: 60px; height: 60px; padding: 10px 0 0; border-right: 2px solid #8a7f92; }
```
